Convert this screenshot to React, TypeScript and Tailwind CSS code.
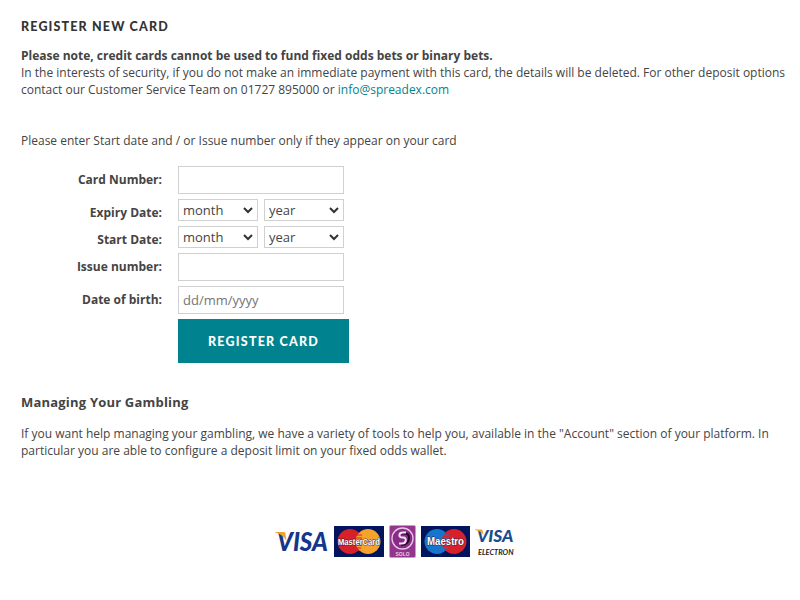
import type { ReactNode } from 'react'

const inputClass =
  'block h-7 w-[166px] border border-[#d0d0d0] bg-white px-1 text-[13px] text-[#444] placeholder:text-[#757575] outline-none'

function Row({ label, labelClass = '-mt-px', children }: { label: string; labelClass?: string; children: ReactNode }) {
  return (
    <div className="flex items-center gap-4">
      <label className={`w-[141px] text-right font-bold ${labelClass}`}>{label}</label>
      {children}
    </div>
  )
}

function DateSelects() {
  return (
    <div className="flex gap-1.5">
      {['month', 'year'].map((name) => (
        <div key={name} className="relative">
          <select className="block h-[22px] w-20 appearance-none border border-[#d0d0d0] bg-white px-1 text-[13px] leading-5 text-[#444]">
            <option>{name}</option>
          </select>
          <svg className="pointer-events-none absolute top-2 right-[5px]" width="10" height="7" viewBox="0 0 10 7">
            <path d="M1 1l4 4 4-4" fill="none" stroke="#333" strokeWidth="2" />
          </svg>
        </div>
      ))}
    </div>
  )
}

function VisaLogo() {
  return (
    <svg className="overflow-visible" width="54" height="24" viewBox="0 0 54 24">
      <text
        x="3" y="21" textLength="51" lengthAdjust="spacingAndGlyphs"
        fontFamily="Lato, sans-serif" fontSize="27" fontWeight="900" fontStyle="italic" fill="#16368c"
      >
        VISA
      </text>
      <path d="M1 2h8.500c1.200 0 1.700.6 1.900 1.600L12.500 11C9.500 6.500 6.500 3.600 1 2.600z" fill="#f2a22b" />
    </svg>
  )
}

function MasterCardLogo() {
  return (
    <svg className="overflow-visible" width="50" height="31" viewBox="0 0 50 31">
      <path d="M0 0h50v31H0z" fill="#02145c" />
      <circle cx="16" cy="15.500" r="12.500" fill="#d8202a" />
      <circle cx="34" cy="15.500" r="12.500" fill="#f5a32b" />
      <path d="M21 9h7M21 12h7M21 19h7M22 22h5" stroke="#d8202a" strokeWidth="1" />
      <text
        x="4" y="19" textLength="42" lengthAdjust="spacingAndGlyphs"
        fontFamily="Liberation Sans, sans-serif" fontSize="9.500" fontWeight="700"
        fill="#fff" stroke="#3b1820" strokeWidth=".8" paintOrder="stroke"
      >
        MasterCard
      </text>
    </svg>
  )
}

function SoloLogo() {
  return (
    <svg width="27" height="33" viewBox="0 0 27 33">
      <rect x=".5" y=".5" width="26" height="32" rx="1.500" fill="#91358d" stroke="#c79ac7" />
      <circle cx="13.500" cy="13.500" r="10.500" fill="#8a2c87" stroke="#e6c9e5" strokeWidth="1.300" />
      <path d="M12 8.500h4c2.500 0 4 1.500 4 4 0 4.500-3 7.500-8 7.500" fill="none" stroke="#220a2b" strokeWidth="2" />
      <path d="M17 7.500h-3c-4.500 0-5 5-.5 5h1c3.500 0 3 6-1.500 6h-3" fill="none" stroke="#f3e4f3" strokeWidth="2" />
      <text
        x="6.500" y="30.500" textLength="14" lengthAdjust="spacingAndGlyphs"
        fontFamily="Liberation Sans, sans-serif" fontSize="5.500" fontWeight="700" fill="#ecd0ea"
      >
        SOLO
      </text>
    </svg>
  )
}

function MaestroLogo() {
  return (
    <svg className="overflow-visible" width="49" height="31" viewBox="0 0 49 31">
      <path d="M0 0h49v31H0z" fill="#02145c" />
      <circle cx="16" cy="15.500" r="12.500" fill="#1676cc" />
      <circle cx="33" cy="15.500" r="12.500" fill="#d8202a" />
      <path d="M21 9h7M21 12h7M21 19h7M22 22h5" stroke="#1676cc" strokeWidth="1" />
      <text
        x="6" y="19" textLength="37" lengthAdjust="spacingAndGlyphs"
        fontFamily="Liberation Sans, sans-serif" fontSize="10.500" fontWeight="700"
        fill="#fff" stroke="#29204f" strokeWidth=".8" paintOrder="stroke"
      >
        Maestro
      </text>
    </svg>
  )
}

function ElectronLogo() {
  return (
    <svg className="overflow-visible" width="40" height="28" viewBox="0 0 40 28">
      <text
        x="3" y="13.500" textLength="36.500" lengthAdjust="spacingAndGlyphs"
        fontFamily="Lato, sans-serif" fontSize="16.500" fontWeight="900" fontStyle="italic" fill="#174c8d"
      >
        VISA
      </text>
      <path d="M1 1.500h6c1 0 1.500.5 1.600 1.200L9.500 7C7.500 4.500 5 2.700 1 2z" fill="#f2a22b" />
      <text
        x="4" y="26.500" textLength="35.500" lengthAdjust="spacingAndGlyphs"
        fontFamily="Lato, sans-serif" fontSize="8" fontWeight="700" fontStyle="italic" fill="#222"
      >
        ELECTRON
      </text>
    </svg>
  )
}

export default function App() {
  return (
    <div className="h-[600px] w-[800px] overflow-hidden bg-white px-[21px] pt-[18px] font-['Open_Sans',sans-serif] text-xs leading-[17px] text-[#444]">
      <h1 className="font-[Lato,sans-serif] text-[12.5px] leading-[17px] font-black tracking-[1.15px] text-[#333]">REGISTER NEW CARD</h1>

      <p className="mt-3 whitespace-nowrap">
        <b>Please note, credit cards cannot be used to fund fixed odds bets or binary bets.</b>
        <br />
        In the interests of security, if you do not make an immediate payment with this card, the details will be deleted. For other deposit options
        <br />
        contact our Customer Service Team on 01727 895000 or <a className="text-[#00838f]">info@spreadex.com</a>
      </p>
      <p className="mt-[34px]">Please enter Start date and / or Issue number only if they appear on your card</p>

      <form className="mt-[17px] flex flex-col gap-[5px]">
        <Row label="Card Number:">
          <input className={inputClass} />
        </Row>
        <Row label="Expiry Date:" labelClass="pt-[5px]">
          <DateSelects />
        </Row>
        <Row label="Start Date:" labelClass="pt-[5px]">
          <DateSelects />
        </Row>
        <Row label="Issue number:">
          <input className={inputClass} />
        </Row>
        <Row label="Date of birth:">
          <input className={inputClass} placeholder="dd/mm/yyyy" />
        </Row>
        <button
          type="button"
          className="ml-[157px] h-11 w-[171px] bg-[#00838f] font-[Lato,sans-serif] text-[12.5px] font-black tracking-[1.2px] text-white"
        >
          REGISTER CARD
        </button>
      </form>

      <h2 className="mt-[31px] text-[13px] leading-[17px] font-bold tracking-[0.2px]">Managing Your Gambling</h2>
      <p className="mt-3.5 whitespace-nowrap">
        If you want help managing your gambling, we have a variety of tools to help you, available in the "Account" section of your platform. In
        <br />
        particular you are able to configure a deposit limit on your fixed odds wallet.
      </p>

      <div className="mt-[66px] ml-[253px] flex items-center">
        <VisaLogo />
        <div className="ml-1.5"><MasterCardLogo /></div>
        <div className="ml-[5px]"><SoloLogo /></div>
        <div className="ml-[5px]"><MaestroLogo /></div>
        <div className="ml-1"><ElectronLogo /></div>
      </div>
    </div>
  )
}
